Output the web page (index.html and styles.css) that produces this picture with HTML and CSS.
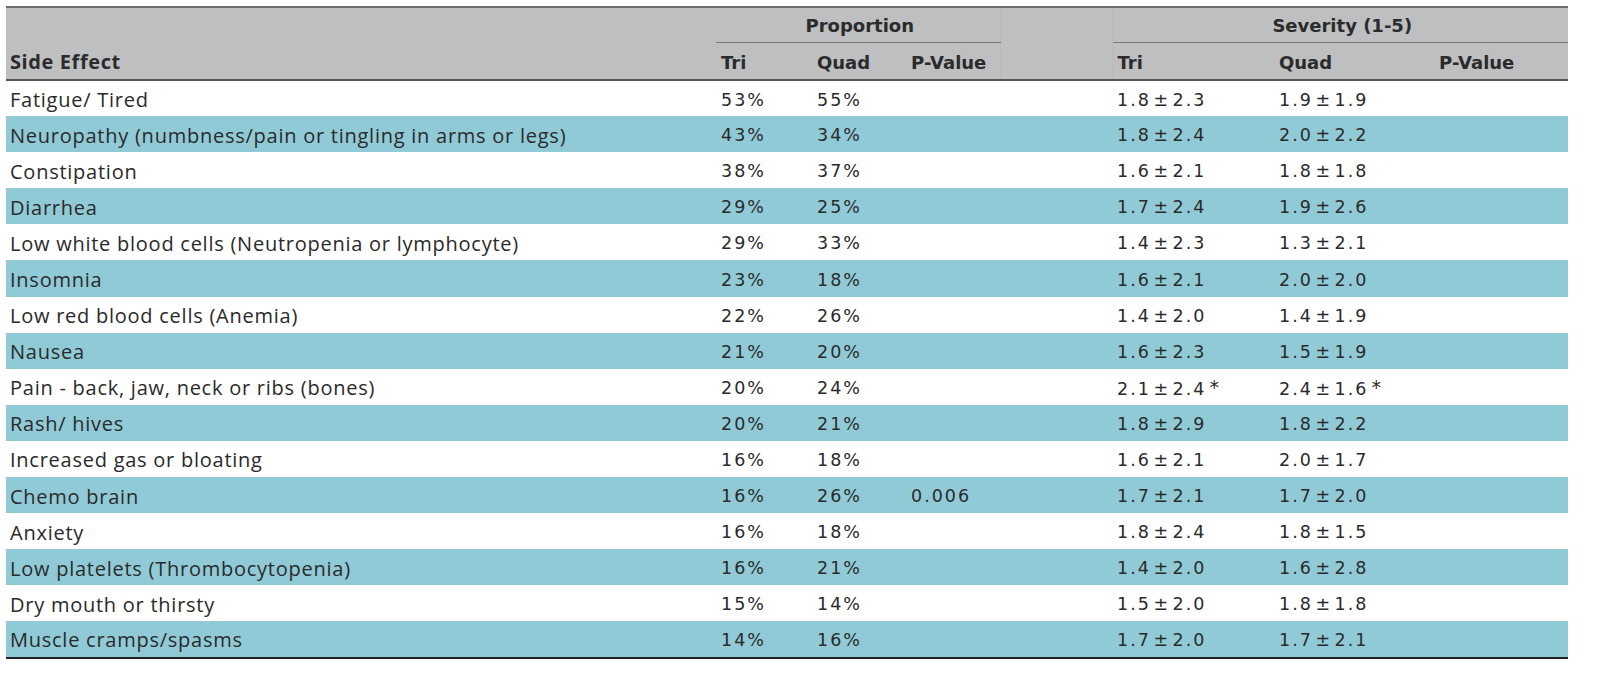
FILE: index.html
```html
<!DOCTYPE html>
<html>
<head>
<meta charset="utf-8">
<link rel="stylesheet" href="styles.css">
</head>
<body>
<table class="se-table">
  <colgroup>
    <col class="c-name"><col class="c-tri"><col class="c-quad"><col class="c-pv">
    <col class="c-gap"><col class="c-stri"><col class="c-squad"><col class="c-spv">
  </colgroup>
  <thead>
    <tr class="h1">
      <th class="th-name" rowspan="2">Side Effect</th>
      <th class="th-group" colspan="3"><span>Proportion</span></th>
      <th class="th-gap" rowspan="2"></th>
      <th class="th-group" colspan="3"><span>Severity (1-5)</span></th>
    </tr>
    <tr class="h2">
      <th class="th-sub">Tri</th><th class="th-sub">Quad</th><th class="th-sub">P-Value</th>
      <th class="th-sub">Tri</th><th class="th-sub">Quad</th><th class="th-sub">P-Value</th>
    </tr>
  </thead>
  <tbody>
    <tr><td class="name">Fatigue/ Tired</td><td class="num">53%</td><td class="num">55%</td><td class="num"></td><td></td><td class="num">1.8 ± 2.3</td><td class="num">1.9 ± 1.9</td><td class="num"></td></tr>
    <tr class="alt"><td class="name">Neuropathy (numbness/pain or tingling in arms or legs)</td><td class="num">43%</td><td class="num">34%</td><td class="num"></td><td></td><td class="num">1.8 ± 2.4</td><td class="num">2.0 ± 2.2</td><td class="num"></td></tr>
    <tr><td class="name">Constipation</td><td class="num">38%</td><td class="num">37%</td><td class="num"></td><td></td><td class="num">1.6 ± 2.1</td><td class="num">1.8 ± 1.8</td><td class="num"></td></tr>
    <tr class="alt"><td class="name">Diarrhea</td><td class="num">29%</td><td class="num">25%</td><td class="num"></td><td></td><td class="num">1.7 ± 2.4</td><td class="num">1.9 ± 2.6</td><td class="num"></td></tr>
    <tr><td class="name">Low white blood cells (Neutropenia or lymphocyte)</td><td class="num">29%</td><td class="num">33%</td><td class="num"></td><td></td><td class="num">1.4 ± 2.3</td><td class="num">1.3 ± 2.1</td><td class="num"></td></tr>
    <tr class="alt"><td class="name">Insomnia</td><td class="num">23%</td><td class="num">18%</td><td class="num"></td><td></td><td class="num">1.6 ± 2.1</td><td class="num">2.0 ± 2.0</td><td class="num"></td></tr>
    <tr><td class="name">Low red blood cells (Anemia)</td><td class="num">22%</td><td class="num">26%</td><td class="num"></td><td></td><td class="num">1.4 ± 2.0</td><td class="num">1.4 ± 1.9</td><td class="num"></td></tr>
    <tr class="alt"><td class="name">Nausea</td><td class="num">21%</td><td class="num">20%</td><td class="num"></td><td></td><td class="num">1.6 ± 2.3</td><td class="num">1.5 ± 1.9</td><td class="num"></td></tr>
    <tr><td class="name">Pain - back, jaw, neck or ribs (bones)</td><td class="num">20%</td><td class="num">24%</td><td class="num"></td><td></td><td class="num">2.1 ± 2.4<span class="star">*</span></td><td class="num">2.4 ± 1.6<span class="star">*</span></td><td class="num"></td></tr>
    <tr class="alt"><td class="name">Rash/ hives</td><td class="num">20%</td><td class="num">21%</td><td class="num"></td><td></td><td class="num">1.8 ± 2.9</td><td class="num">1.8 ± 2.2</td><td class="num"></td></tr>
    <tr><td class="name">Increased gas or bloating</td><td class="num">16%</td><td class="num">18%</td><td class="num"></td><td></td><td class="num">1.6 ± 2.1</td><td class="num">2.0 ± 1.7</td><td class="num"></td></tr>
    <tr class="alt"><td class="name">Chemo brain</td><td class="num">16%</td><td class="num">26%</td><td class="num">0.006</td><td></td><td class="num">1.7 ± 2.1</td><td class="num">1.7 ± 2.0</td><td class="num"></td></tr>
    <tr><td class="name">Anxiety</td><td class="num">16%</td><td class="num">18%</td><td class="num"></td><td></td><td class="num">1.8 ± 2.4</td><td class="num">1.8 ± 1.5</td><td class="num"></td></tr>
    <tr class="alt"><td class="name">Low platelets (Thrombocytopenia)</td><td class="num">16%</td><td class="num">21%</td><td class="num"></td><td></td><td class="num">1.4 ± 2.0</td><td class="num">1.6 ± 2.8</td><td class="num"></td></tr>
    <tr><td class="name">Dry mouth or thirsty</td><td class="num">15%</td><td class="num">14%</td><td class="num"></td><td></td><td class="num">1.5 ± 2.0</td><td class="num">1.8 ± 1.8</td><td class="num"></td></tr>
    <tr class="alt last"><td class="name">Muscle cramps/spasms</td><td class="num">14%</td><td class="num">16%</td><td class="num"></td><td></td><td class="num">1.7 ± 2.0</td><td class="num">1.7 ± 2.1</td><td class="num"></td></tr>
  </tbody>
</table>
</body>
</html>
```
FILE: styles.css
```css
html, body {
  margin: 0;
  padding: 0;
  background: #ffffff;
}
body {
  padding: 6px 32px 0 6px;
}
.se-table {
  border-collapse: collapse;
  table-layout: fixed;
  width: 1562px;
  color: #2a2a2a;
}
.c-name { width: 710px; }
.c-tri { width: 96px; }
.c-quad { width: 94px; }
.c-pv { width: 94px; }
.c-gap { width: 112px; }
.c-stri { width: 162px; }
.c-squad { width: 160px; }
.c-spv { width: 134px; }

.se-table thead {
  background: #bebfc1;
}
.se-table thead tr.h1 th {
  border-top: 2px solid #6a6a6a;
}
.se-table th {
  padding: 0 0 0 5px;
  text-align: left;
  font-family: "DejaVu Sans", sans-serif;
  font-weight: bold;
  font-size: 18px;
  color: #2b2b2b;
  white-space: nowrap;
  line-height: 22px;
}
.h1 th { height: 34px; }
.h2 th { height: 33px; }
.th-name {
  font-family: "Open Sans", sans-serif !important;
  font-size: 20px !important;
  letter-spacing: 0.6px;
  vertical-align: bottom;
  padding: 0 0 6px 4px !important;
  border-bottom: 2px solid #555;
}
.th-group {
  text-align: center !important;
  padding: 0 !important;
  border-bottom: 1px solid #7a7a7a;
  vertical-align: middle;
}
.th-group span {
  position: relative;
  top: 1px;
  left: 2px;
}
.th-gap {
  border-bottom: 2px solid #555;
  border-left: 1px solid #b9babc;
  border-right: 1px solid #b9babc;
}
.th-sub {
  vertical-align: middle;
  border-bottom: 2px solid #555;
  padding-top: 3px !important;
}

.se-table td {
  height: 36.1px;
  padding: 2px 0 0 5px;
  box-sizing: border-box;
  white-space: nowrap;
  vertical-align: middle;
}
.se-table tr.alt td {
  background: #91cad7;
}
.se-table tr.last td {
  border-bottom: 2px solid #222;
}
.name {
  font-family: "Open Sans", sans-serif;
  font-size: 20px;
  letter-spacing: 0.75px;
  color: #2a2a2a;
  padding-left: 4px !important;
}
.num {
  font-family: "DejaVu Sans", sans-serif;
  font-size: 17.5px;
  letter-spacing: 2px;
  word-spacing: -5px;
  color: #2a2a2a;
}
.star {
  margin-left: 3px;
  font-size: 19px;
  position: relative;
  top: -1px;
}
```
